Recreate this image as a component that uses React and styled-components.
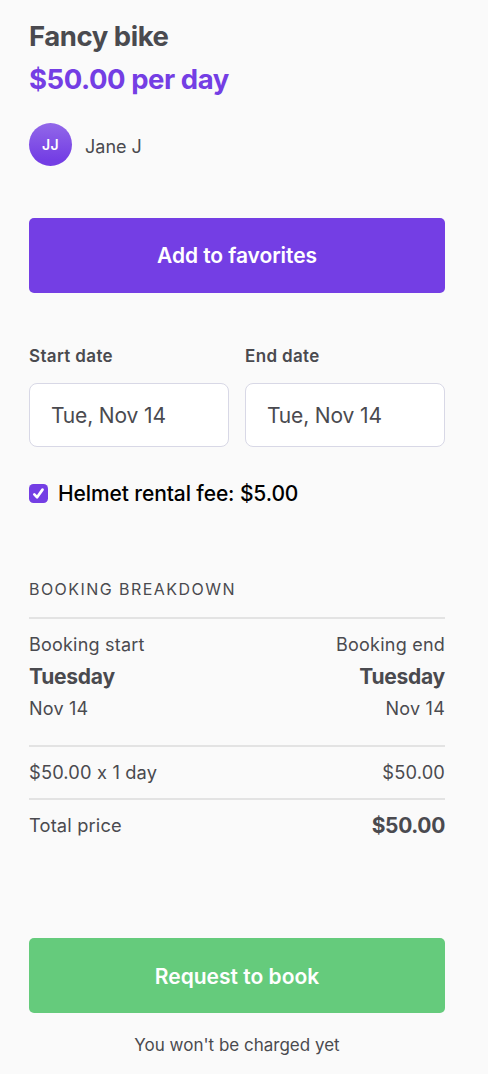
import React from "react";
import styled, { createGlobalStyle } from "styled-components";

const GlobalStyle = createGlobalStyle`
  *, *::before, *::after { box-sizing: border-box; }
  body {
    margin: 0;
    background: #fafafa;
    color: #4a4a4f;
    font-family: Inter, "Liberation Sans", sans-serif;
    font-feature-settings: "calt" 0;
    -webkit-font-smoothing: antialiased;
  }
`;

const Panel = styled.main`
  width: 488px;
  height: 1074px;
  padding: 15px 43px 0 29px;
  background: #fafafa;
  overflow: hidden;
`;

const Heading = styled.h1`
  margin: 0;
  font-size: 27.5px;
  line-height: 43px;
  font-weight: 700;
  letter-spacing: -0.45px;
  color: ${(p) => (p.$accent ? "#743ee4" : "#4a4a4f")};
`;

const Author = styled.div`
  display: flex;
  align-items: center;
  gap: 13px;
  height: 43px;
  margin-top: 22px;
`;

const Avatar = styled.div`
  width: 43px;
  height: 43px;
  border-radius: 50%;
  background: linear-gradient(180deg, #9268e9 0%, #743ee4 85%);
  color: #fff;
  font-size: 14px;
  line-height: 44px;
  font-weight: 600;
  letter-spacing: 0.3px;
  text-align: center;
`;

const AuthorName = styled.span`
  padding-top: 4px;
  font-size: 18px;
  line-height: 24px;
`;

const Button = styled.button`
  display: block;
  width: 100%;
  height: 75px;
  padding: ${(p) => (p.$success ? "2px 0 0" : "0")};
  border: 0;
  border-radius: 5px;
  background: ${(p) => (p.$success ? "#65cb7c" : "#743ee4")};
  color: #fff;
  font: 600 21px/74px Inter, "Liberation Sans", sans-serif;
  letter-spacing: ${(p) => p.$spacing || "0"};
`;

const FavoriteArea = styled.section`
  margin-top: 52px;
`;

const Dates = styled.div`
  display: grid;
  grid-template-columns: 1fr 1fr;
  gap: 16px;
  margin-top: 51px;
`;

const FieldLabel = styled.label`
  display: block;
  font-size: 17px;
  line-height: 24px;
  font-weight: 600;
  letter-spacing: 0.35px;
`;

const DateField = styled.div`
  height: 64px;
  margin-top: 15px;
  padding-left: 21px;
  border: 1px solid #d8d8e6;
  border-radius: 8px;
  background: #fff;
  font-size: 21px;
  line-height: 63px;
  letter-spacing: -0.15px;
`;

const FeeOption = styled.div`
  display: flex;
  align-items: center;
  gap: 10px;
  height: 30px;
  margin-top: 32px;
  color: #000;
  font-size: 21px;
  font-weight: 500;
  line-height: 30px;
  letter-spacing: -0.1px;
`;

const CheckIcon = styled.svg`
  display: block;
  width: 19px;
  height: 19px;
  margin-bottom: 1px;
`;

const SectionTitle = styled.h2`
  margin: 68px 0 16px;
  font-size: 16px;
  line-height: 24px;
  font-weight: 400;
  letter-spacing: 1.45px;
`;

const Rule = styled.hr`
  height: 2px;
  margin: 0;
  border: 0;
  background: #e3e3e3;
`;

const Period = styled.div`
  display: flex;
  justify-content: space-between;
  height: 126px;
  padding-top: 10px;
`;

const Moment = styled.div`
  font-size: 18px;
  line-height: 32px;
  letter-spacing: 0.22px;
  text-align: ${(p) => p.$align || "left"};
`;

const Day = styled.div`
  font-size: 21px;
  font-weight: 700;
  letter-spacing: -0.25px;
`;

const PriceRow = styled.div`
  display: flex;
  justify-content: space-between;
  height: 51px;
  font-size: 18.3px;
  line-height: 51px;
  letter-spacing: 0.15px;
`;

const Total = styled.span`
  font-size: 21px;
  font-weight: 700;
  letter-spacing: -0.35px;
`;

const BookingArea = styled.section`
  margin-top: 87px;
`;

const Note = styled.p`
  margin: 20px 0 0;
  font-size: 17px;
  line-height: 24px;
  text-align: center;
`;

function DateInput({ label, value }) {
  return (
    <div>
      <FieldLabel>{label}</FieldLabel>
      <DateField>{value}</DateField>
    </div>
  );
}

export default function App() {
  return (
    <>
      <GlobalStyle />
      <Panel>
        <Heading>Fancy bike</Heading>
        <Heading as="p" $accent>$50.00 per day</Heading>
        <Author>
          <Avatar>JJ</Avatar>
          <AuthorName>Jane J</AuthorName>
        </Author>
        <FavoriteArea>
          <Button $spacing="-0.08px">Add to favorites</Button>
        </FavoriteArea>
        <Dates>
          <DateInput label="Start date" value="Tue, Nov 14" />
          <DateInput label="End date" value="Tue, Nov 14" />
        </Dates>
        <FeeOption>
          <CheckIcon viewBox="0 0 19 19">
            <rect width="19" height="19" rx="4.5" fill="#743ee4" />
            <path d="M5.3 10.4 L8.1 13.2 L13.5 5.6" fill="none" stroke="#fff" strokeWidth="2.7" strokeLinecap="round" strokeLinejoin="round" />
          </CheckIcon>
          <span>Helmet rental fee: $5.00</span>
        </FeeOption>
        <SectionTitle>BOOKING BREAKDOWN</SectionTitle>
        <Rule />
        <Period>
          <Moment>
            <div>Booking start</div>
            <Day>Tuesday</Day>
            <div>Nov 14</div>
          </Moment>
          <Moment $align="right">
            <div>Booking end</div>
            <Day>Tuesday</Day>
            <div>Nov 14</div>
          </Moment>
        </Period>
        <Rule />
        <PriceRow>
          <span>$50.00 x 1 day</span>
          <span>$50.00</span>
        </PriceRow>
        <Rule />
        <PriceRow>
          <span>Total price</span>
          <Total>$50.00</Total>
        </PriceRow>
        <BookingArea>
          <Button $success>Request to book</Button>
          <Note>You won't be charged yet</Note>
        </BookingArea>
      </Panel>
    </>
  );
}
